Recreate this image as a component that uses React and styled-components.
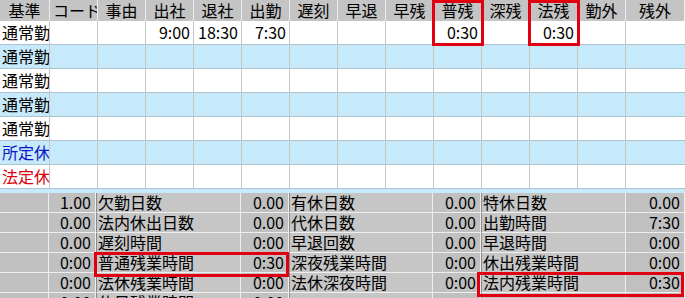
import React from "react";
import styled, { createGlobalStyle } from "styled-components";

const Global = createGlobalStyle`
  html, body { margin: 0; padding: 0; background: #ffffff; overflow: hidden; }
  body { font-family: "Noto Sans CJK JP", "Noto Sans", sans-serif; }
`;

const Screen = styled.div`
  width: 685px;
  height: 298px;
  overflow: hidden;
  font-family: "Noto Sans CJK JP", "Noto Sans", sans-serif;
  font-size: 16px;
  color: #000;
  background: #c6eafb;
`;

const TopGrid = styled.div`
  display: grid;
  grid-template-columns: 50px repeat(12, 48px) 59px;
  grid-template-rows: 21px;
  grid-auto-rows: 24px;
`;

const HeadCell = styled.div`
  position: relative;
  z-index: ${(p) => (p.$mark ? 2 : 0)};
  background: #c4c4c4;
  border-right: 1px solid #ededed;
  text-align: center;
  line-height: 21px;
  padding: 0 3px;
  white-space: nowrap;
  overflow: ${(p) => (p.$mark ? "visible" : "hidden")};
  &:last-child { border-right: none; }
`;

const BodyCell = styled.div`
  background: ${(p) => (p.$alt ? "#c6eafb" : "#ffffff")};
  border-right: 1px solid #c6c6c6;
  border-bottom: 1px solid #aec2cd;
  line-height: 23px;
  white-space: nowrap;
  overflow: hidden;
  text-align: ${(p) => (p.$num ? "right" : "left")};
  padding: ${(p) => (p.$num ? "0 3px 0 0" : "0 0 0 2px")};
  color: ${(p) => p.$color || "#000"};
  &:nth-child(14n) { border-right: none; }
`;

const Gap = styled.div`
  height: 4px;
  background: #c6eafb;
`;

const BottomGrid = styled.div`
  display: grid;
  grid-template-columns: 49px 47px 145px 48px 144px 48px 145px 59px;
  grid-auto-rows: 20px;
  background: #c0c0c0;
`;

const SumCell = styled.div`
  position: relative;
  z-index: ${(p) => (p.$mark ? 2 : 0)};
  background: ${(p) => (p.$kind === "label" ? "#c6c6c6" : "#c0c0c0")};
  border-right: 1px solid #eeeeee;
  border-bottom: 1px solid #eeeeee;
  border-left: ${(p) => (p.$kind === "label" ? "1px solid #8a8a8a" : "none")};
  line-height: 19px;
  white-space: nowrap;
  overflow: ${(p) => (p.$mark ? "visible" : "hidden")};
  text-align: ${(p) => (p.$kind === "value" ? "right" : "left")};
  padding: ${(p) => (p.$kind === "value" ? "0 4px 0 0" : p.$kind === "label" ? "0 0 0 1px" : "0")};
`;

/* red annotation frame drawn over the marked cell and its neighbour */
const Marker = styled.span`
  position: absolute;
  left: ${(p) => p.$l}px;
  top: ${(p) => p.$t}px;
  width: ${(p) => p.$w}px;
  height: ${(p) => p.$h}px;
  border: 3px solid #e00012;
  box-sizing: border-box;
  pointer-events: none;
`;

const headers = ["基準", "コード", "事由", "出社", "退社", "出勤", "遅刻", "早退", "早残", "普残", "深残", "法残", "勤外", "残外"];
const markedHeaders = { 普残: true, 法残: true };

const rows = [
  { kind: "通常勤", vals: ["", "", "9:00", "18:30", "7:30", "", "", "", "0:30", "", "0:30", "", ""] },
  { kind: "通常勤" },
  { kind: "通常勤" },
  { kind: "通常勤" },
  { kind: "通常勤" },
  { kind: "所定休", color: "#0a14c8" },
  { kind: "法定休", color: "#d80010" },
];

const summary = [
  ["1.00", "欠勤日数", "0.00", "有休日数", "0.00", "特休日数", "0.00"],
  ["0.00", "法内休出日数", "0.00", "代休日数", "0.00", "出勤時間", "7:30"],
  ["0.00", "遅刻時間", "0:00", "早退回数", "0.00", "早退時間", "0:00"],
  ["0:00", "普通残業時間", "0:30", "深夜残業時間", "0:00", "休出残業時間", "0:00"],
  ["0:00", "法休残業時間", "0:00", "法休深夜時間", "0:00", "法内残業時間", "0:30"],
  ["0:00", "休日残業時間", "0:00", "", "", "", ""],
];

const summaryMarks = {
  普通残業時間: { l: -3, t: -1, w: 195, h: 25 },
  法内残業時間: { l: -5, t: -1, w: 207, h: 25 },
};

export default function App() {
  return (
    <Screen>
      <Global />
      <TopGrid>
        {headers.map((h) => (
          <HeadCell key={h} $mark={markedHeaders[h]}>
            {h}
            {markedHeaders[h] && <Marker $l={-2} $t={0} $w={52} $h={46} />}
          </HeadCell>
        ))}
        {rows.map((r, ri) => {
          const vals = r.vals || Array(13).fill("");
          return (
            <React.Fragment key={ri}>
              <BodyCell $alt={ri % 2 === 1} $color={r.color}>{r.kind}</BodyCell>
              {vals.map((v, ci) => (
                <BodyCell key={ci} $alt={ri % 2 === 1} $num>{v}</BodyCell>
              ))}
            </React.Fragment>
          );
        })}
      </TopGrid>
      <Gap />
      <BottomGrid>
        {summary.map((s, ri) => (
          <React.Fragment key={ri}>
            <SumCell $kind="blank" />
            {s.map((v, ci) => {
              const m = summaryMarks[v];
              return (
                <SumCell key={ci} $kind={ci % 2 === 0 ? "value" : "label"} $mark={!!m}>
                  {v}
                  {m && <Marker $l={m.l} $t={m.t} $w={m.w} $h={m.h} />}
                </SumCell>
              );
            })}
          </React.Fragment>
        ))}
      </BottomGrid>
    </Screen>
  );
}
